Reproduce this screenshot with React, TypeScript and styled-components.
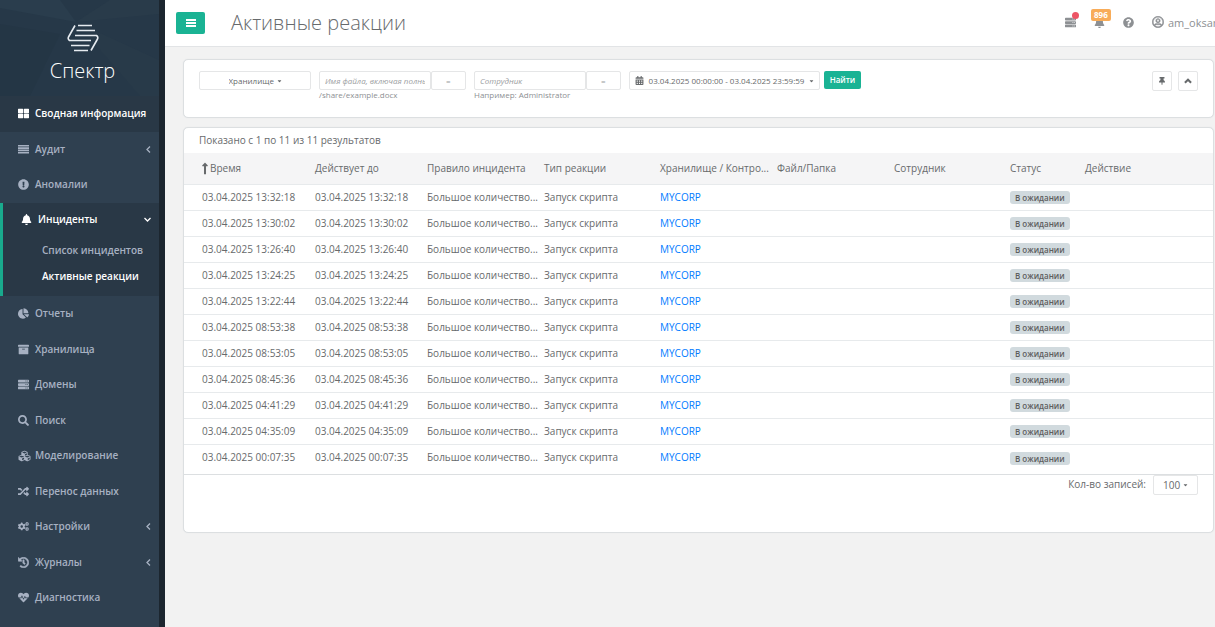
import React from "react";
import styled, { createGlobalStyle, css } from "styled-components";
import {
  FaThLarge, FaExclamationCircle, FaBell, FaChartPie, FaArchive, FaServer,
  FaSearch, FaCubes, FaRandom, FaCogs, FaHistory, FaHeartbeat,
  FaThumbtack, FaQuestionCircle, FaRegUserCircle, FaCalendarAlt,
  FaLongArrowAltUp, FaCaretDown,
} from "react-icons/fa";

const GlobalStyle = createGlobalStyle`
  * { box-sizing: border-box; }
  body {
    margin: 0;
    background: #f2f2f2;
    color: #676a6c;
    font-family: "Open Sans", "Noto Sans", sans-serif;
    font-size: 10px;
    line-height: 15px;
    overflow-x: hidden;
  }
  button, input, select { font-family: inherit; font-size: inherit; line-height: inherit; color: inherit; }
  button { cursor: pointer; }
  ul { list-style: none; margin: 0; padding: 0; }
  a { text-decoration: none; }
`;

const Shell = styled.div`
  display: flex;
  min-height: 100vh;
`;

const Sidebar = styled.nav`
  flex: 0 0 165px;
  background: #2f4050;
  border-right: 6px solid #1c262f;
`;

const Brand = styled.div`
  position: relative;
  display: flex;
  flex-direction: column;
  align-items: center;
  height: 96px;
  padding: 24px 0 0 6px;
  background: #263848;
  color: #e6ebf0;
  overflow: hidden;
`;

const BrandPattern = styled.svg`
  position: absolute;
  inset: 0;
  width: 100%;
  height: 100%;
`;

const BrandLogo = styled.svg`
  position: relative;
  width: 32px;
  height: 28px;
`;

const BrandName = styled.span`
  position: relative;
  margin-top: 6px;
  font-size: 20px;
  line-height: 26px;
  font-weight: 300;
  color: #fff;
`;

const Menu = styled.ul`
  display: grid;
  grid-auto-rows: 36px 35px;
`;

const MenuLink = styled.a<{ $active?: boolean; $dark?: boolean }>`
  display: flex;
  align-items: center;
  gap: 6px;
  height: 100%;
  padding: 0 7px 1px 18px;
  background: ${(p) => (p.$dark ? "#293846" : "transparent")};
  color: ${(p) => (p.$active ? "#fff" : "#a7b1c2")};
  font-weight: 600;
  white-space: nowrap;
`;

const MenuIcon = styled.span`
  display: flex;
  flex: none;
  width: 11px;
  svg { flex: none; width: 11px; height: 11px; }
  svg.wide { width: 13px; height: 12px; }
  svg.heavy { stroke: currentColor; stroke-width: 24; }
`;

const MenuArrow = styled.span`
  display: flex;
  margin-left: auto;
`;

const Group = styled.section`
  height: 93px;
  background: #293846;
  border-left: 3px solid #19aa8d;
`;

const GroupHead = styled.div`
  height: 34px;
`;

const SubMenu = styled.ul`
  display: grid;
  grid-auto-rows: 26px;
`;

const SubLink = styled.a<{ $active?: boolean }>`
  display: flex;
  align-items: center;
  height: 100%;
  padding-left: 39px;
  color: ${(p) => (p.$active ? "#fff" : "#a7b1c2")};
  font-weight: 600;
  white-space: nowrap;
`;

const Main = styled.div`
  flex: 1;
  min-width: 0;
`;

const TopBar = styled.header`
  display: flex;
  align-items: center;
  height: 47px;
  padding-left: 11px;
  background: #fff;
  border-bottom: 1px solid #e2e4e6;
  overflow: hidden;
`;

const MenuToggle = styled.button`
  display: flex;
  align-items: center;
  justify-content: center;
  width: 29px;
  height: 22px;
  border: 0;
  border-radius: 2px;
  background: #1ab394;
  color: #fff;
`;

const Title = styled.h1`
  flex: 1;
  margin: 0 0 0 26px;
  font-size: 20px;
  line-height: 28px;
  font-weight: 300;
`;

const TopTools = styled.div`
  display: flex;
  align-items: center;
  align-self: flex-start;
  gap: 18px;
  height: 44px;
`;

const ToolButton = styled.button`
  position: relative;
  display: flex;
  padding: 0;
  border: 0;
  background: none;
  color: #8d9093;
  font-size: 11px;
`;

const AlertDot = styled.span`
  position: absolute;
  top: -5px;
  right: -3px;
  width: 7px;
  height: 7px;
  border-radius: 50%;
  background: #ed5565;
`;

const CountBadge = styled.span`
  position: absolute;
  bottom: 7px;
  left: -3px;
  height: 12px;
  padding: 0 3px;
  border-radius: 2px;
  background: #f8ac59;
  color: #fff;
  font-size: 8px;
  line-height: 12px;
  font-weight: 700;
`;

const UserLink = styled.a`
  display: flex;
  align-items: center;
  gap: 4px;
  width: 63px;
  color: #8d9093;
  font-size: 11px;
  white-space: nowrap;
  svg { flex: none; width: 12px; height: 12px; stroke: currentColor; stroke-width: 18; }
`;

const Content = styled.main`
  display: flex;
  flex-direction: column;
  gap: 9px;
  padding: 12px 1px 20px 18px;
`;

const Card = styled.section`
  background: #fff;
  border: 1px solid #dcdfe1;
  border-radius: 5px;
  box-shadow: 0 0 1px #dcdfe1;
`;

const Filters = styled.form`
  display: flex;
  align-items: flex-start;
  height: 57px;
  padding: 11px 15px 0;
  font-size: 8px;
  line-height: 10px;
`;

const boxed = css`
  border: 1px solid #e5e6e7;
  border-radius: 2px;
  background: #fff;
`;

const Field = styled.div`
  margin-right: 8px;
`;

const FieldRow = styled.div`
  display: flex;
`;

const SelectBox = styled.span<{ $width: number; $height?: number; $faint?: boolean }>`
  ${boxed}
  display: flex;
  align-items: center;
  justify-content: center;
  gap: 2px;
  width: ${(p) => p.$width}px;
  height: ${(p) => p.$height ?? 19}px;
  color: ${(p) => (p.$faint ? "#9b9ea1" : "inherit")};

  select {
    appearance: none;
    padding: 0;
    border: 0;
    background: none;
  }
  svg { flex: none; width: 5px; height: 6px; }
`;

const TextInput = styled.input`
  ${boxed}
  width: 112px;
  height: 19px;
  padding: 0 5px;
  &::placeholder { color: #9b9ea1; font-style: italic; opacity: 1; }
`;

const Hint = styled.small`
  display: block;
  font-size: 8px;
  line-height: 10px;
  color: #8d9093;
`;

const DateButton = styled.button`
  ${boxed}
  display: flex;
  align-items: center;
  justify-content: space-between;
  width: 191px;
  height: 19px;
  margin-right: 4px;
  padding: 0 5px;
  white-space: nowrap;
  svg { width: 9px; height: 9px; }
  svg:last-child { width: 5px; height: 6px; }
`;

const SubmitButton = styled.button`
  height: 18px;
  width: 37px;
  padding: 0;
  border: 0;
  border-radius: 2px;
  background: #1ab394;
  color: #fff;
  font-weight: 600;
`;

const CardActions = styled.div`
  display: flex;
  gap: 6px;
  margin-left: auto;
`;

const SquareButton = styled.button`
  ${boxed}
  display: flex;
  align-items: center;
  justify-content: center;
  width: 20px;
  height: 20px;
  padding: 0;
`;

const Summary = styled.p`
  margin: 0;
  padding: 5px 15px;
`;

const TableWrap = styled.div`
  padding-bottom: 4px;
  border-bottom: 1px solid #dcdfe1;
`;

const Table = styled.table`
  width: 100%;
  table-layout: fixed;
  border-collapse: collapse;

  th, td {
    height: 26px;
    padding: 0 0 0 4px;
    text-align: left;
    font-weight: 400;
    white-space: nowrap;
    overflow: hidden;
    text-overflow: ellipsis;
    border-bottom: 1px solid #e7eaec;
  }
  th { height: 31px; background: #f5f5f6; }
  td:first-child { padding-left: 18px; }
  th:first-child { padding-left: 17px; }
  tbody tr:last-child td { border-bottom: 0; }
  a { color: #007bff; }
`;

const SortLabel = styled.span`
  display: flex;
  align-items: center;
  gap: 1px;
  svg { width: 8px; height: 13px; }
`;

const Status = styled.span`
  display: inline-block;
  padding: 0 5px;
  border-radius: 3px;
  background: #d1dade;
  color: #5e5e5e;
  font-size: 8px;
  line-height: 13px;
  font-weight: 600;
  vertical-align: middle;
`;

const CardFooter = styled.footer`
  display: flex;
  justify-content: flex-end;
  align-items: flex-start;
  gap: 7px;
  padding: 0 15px 37px;
  line-height: 18px;
`;

type Item = { label: string; icon: React.ReactNode; arrow?: boolean; active?: boolean };

const LinesIcon = () => (
  <svg viewBox="0 0 11 11" fill="currentColor" aria-hidden="true">
    <path d="M0 1h11v1.600H0zM0 3.300h11v1.600H0zM0 5.600h11v1.600H0zM0 7.900h11v1.600H0z" />
  </svg>
);

const BarsIcon = () => (
  <svg width="10" height="8" viewBox="0 0 10 8" fill="currentColor" aria-hidden="true">
    <path d="M0 0h10v2H0zM0 3h10v2H0zM0 6h10v2H0z" />
  </svg>
);

const angles = { left: "M5 1.500L2 4.500L5 7.500", down: "M1.500 3L4.500 6L7.500 3" };

const AngleIcon = ({ to }: { to: "left" | "down" }) => (
  <svg
    width={to === "left" ? 7 : 9} height="9" viewBox={to === "left" ? "0 0 7 9" : "0 0 9 9"}
    fill="none" stroke="currentColor" strokeWidth="1.300" aria-hidden="true"
  >
    <path d={angles[to]} />
  </svg>
);

const ChevronUpIcon = () => (
  <svg width="8" height="8" viewBox="0 0 8 8" fill="none" stroke="currentColor" strokeWidth="2" aria-hidden="true">
    <path d="M.9 5.800L4 2.700L7.100 5.800" />
  </svg>
);

const topItems: Item[] = [
  { label: "Сводная информация", icon: <FaThLarge />, active: true },
  { label: "Аудит", icon: <LinesIcon />, arrow: true },
  { label: "Аномалии", icon: <FaExclamationCircle /> },
];

const bottomItems: Item[] = [
  { label: "Отчеты", icon: <FaChartPie /> },
  { label: "Хранилища", icon: <FaArchive /> },
  { label: "Домены", icon: <FaServer /> },
  { label: "Поиск", icon: <FaSearch /> },
  { label: "Моделирование", icon: <FaCubes className="wide" /> },
  { label: "Перенос данных", icon: <FaRandom /> },
  { label: "Настройки", icon: <FaCogs />, arrow: true },
  { label: "Журналы", icon: <FaHistory className="heavy" />, arrow: true },
  { label: "Диагностика", icon: <FaHeartbeat /> },
];

const times = [
  "13:32:18", "13:30:02", "13:26:40", "13:24:25", "13:22:44", "08:53:38",
  "08:53:05", "08:45:36", "04:41:29", "04:35:09", "00:07:35",
];

const columnWidths = [127, 112, 117, 116, 117, 117, 116, 75, 132];
const headers = [
  "Действует до", "Правило инцидента", "Тип реакции", "Хранилище / Контро...",
  "Файл/Папка", "Сотрудник", "Статус", "Действие",
];

function MenuList({ items }: { items: Item[] }) {
  return (
    <Menu>
      {items.map((item) => (
        <li key={item.label}>
          <MenuLink href="#" $active={item.active} $dark={item.active}>
            <MenuIcon>{item.icon}</MenuIcon>
            {item.label}
            {item.arrow && <MenuArrow><AngleIcon to="left" /></MenuArrow>}
          </MenuLink>
        </li>
      ))}
    </Menu>
  );
}

function OperatorSelect({ label }: { label: string }) {
  return (
    <SelectBox $width={35} $faint>
      <select aria-label={label}><option>=</option></select>
    </SelectBox>
  );
}

export default function App() {
  return (
    <>
      <GlobalStyle />
      <Shell>
        <Sidebar>
          <Brand>
            <BrandPattern viewBox="0 0 159 96" preserveAspectRatio="none" aria-hidden="true">
              <path d="M0 0H60L76 22L0 8Z" fill="#2a3d4d" />
              <path d="M76 22L110 0H159V14Z" fill="#293b4a" />
              <path d="M76 22L159 60V96H140Z" fill="#283a49" />
              <path d="M0 24L60 34L30 96H0Z" fill="#243645" />
            </BrandPattern>
            <BrandLogo viewBox="0 0 32 28" fill="none" stroke="currentColor" strokeWidth="1.600" aria-hidden="true">
              <path d="M11 1.500H25M9.500 6.500H28M8 11.500H29.500Q31.500 13 30.500 15L24 26.500M24 16.500H2.500Q.5 15 1.500 13L8 1.500M22.500 21.500H4M21 26.500H7" />
            </BrandLogo>
            <BrandName>Спектр</BrandName>
          </Brand>
          <MenuList items={topItems} />
          <Group>
            <GroupHead>
              <MenuLink href="#" $active>
                <MenuIcon><FaBell /></MenuIcon>
                Инциденты
                <MenuArrow><AngleIcon to="down" /></MenuArrow>
              </MenuLink>
            </GroupHead>
            <SubMenu>
              <li><SubLink href="#">Список инцидентов</SubLink></li>
              <li><SubLink href="#" $active>Активные реакции</SubLink></li>
            </SubMenu>
          </Group>
          <MenuList items={bottomItems} />
        </Sidebar>
        <Main>
          <TopBar>
            <MenuToggle aria-label="Меню"><BarsIcon /></MenuToggle>
            <Title>Активные реакции</Title>
            <TopTools>
              <ToolButton aria-label="Задачи"><FaServer /><AlertDot /></ToolButton>
              <ToolButton aria-label="Уведомления"><FaBell /><CountBadge>896</CountBadge></ToolButton>
              <ToolButton aria-label="Справка"><FaQuestionCircle /></ToolButton>
              <UserLink href="#"><FaRegUserCircle />am_oksan</UserLink>
            </TopTools>
          </TopBar>
          <Content>
            <Card>
              <Filters onSubmit={(e) => e.preventDefault()}>
                <Field>
                  <SelectBox $width={112}>
                    <select aria-label="Хранилище"><option>Хранилище</option></select>
                    <FaCaretDown />
                  </SelectBox>
                </Field>
                <Field>
                  <FieldRow>
                    <TextInput aria-label="Имя файла" placeholder="Имя файла, включая полный путь" />
                    <OperatorSelect label="Условие для файла" />
                  </FieldRow>
                  <Hint>/share/example.docx</Hint>
                </Field>
                <Field>
                  <FieldRow>
                    <TextInput aria-label="Сотрудник" placeholder="Сотрудник" />
                    <OperatorSelect label="Условие для сотрудника" />
                  </FieldRow>
                  <Hint>Например: Administrator</Hint>
                </Field>
                <DateButton type="button">
                  <FaCalendarAlt />
                  03.04.2025 00:00:00 - 03.04.2025 23:59:59
                  <FaCaretDown />
                </DateButton>
                <SubmitButton type="submit">Найти</SubmitButton>
                <CardActions>
                  <SquareButton type="button" aria-label="Закрепить"><FaThumbtack /></SquareButton>
                  <SquareButton type="button" aria-label="Свернуть"><ChevronUpIcon /></SquareButton>
                </CardActions>
              </Filters>
            </Card>
            <Card>
              <Summary>Показано с 1 по 11 из 11 результатов</Summary>
              <TableWrap>
                <Table>
                  <colgroup>
                    {columnWidths.map((w, i) => <col key={i} width={w} />)}
                  </colgroup>
                  <thead>
                    <tr>
                      <th><SortLabel><FaLongArrowAltUp />Время</SortLabel></th>
                      {headers.map((h) => <th key={h}>{h}</th>)}
                    </tr>
                  </thead>
                  <tbody>
                    {times.map((t) => (
                      <tr key={t}>
                        <td>03.04.2025 {t}</td>
                        <td>03.04.2025 {t}</td>
                        <td>Большое количество...</td>
                        <td>Запуск скрипта</td>
                        <td><a href="#">MYCORP</a></td>
                        <td />
                        <td />
                        <td><Status>В ожидании</Status></td>
                        <td />
                      </tr>
                    ))}
                  </tbody>
                </Table>
              </TableWrap>
              <CardFooter>
                <label htmlFor="page-size">Кол-во записей:</label>
                <SelectBox $width={45} $height={20}>
                  <select id="page-size"><option>100</option></select>
                  <FaCaretDown />
                </SelectBox>
              </CardFooter>
            </Card>
          </Content>
        </Main>
      </Shell>
    </>
  );
}
